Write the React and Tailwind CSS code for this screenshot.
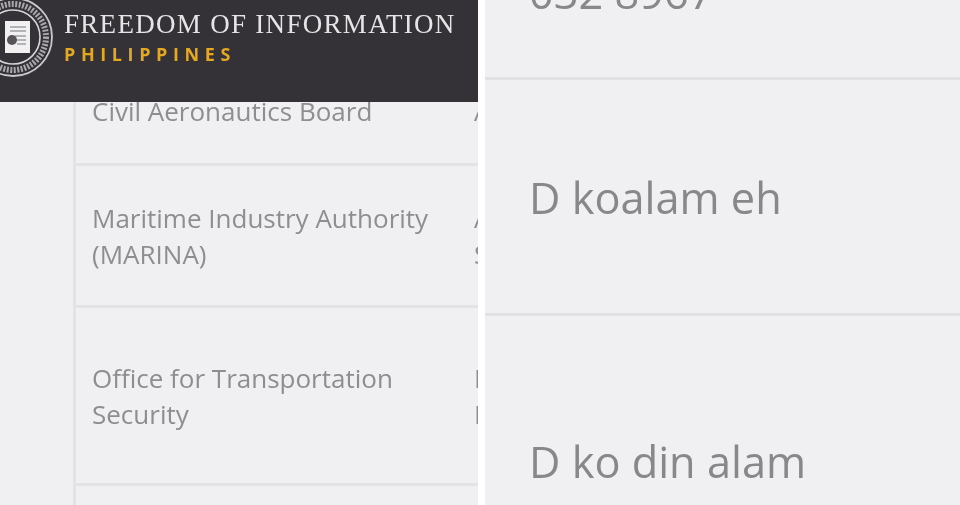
const font = { fontFamily: '"Open Sans", sans-serif' };

const Logo = () => (
  <svg width="80" height="80" viewBox="0 0 80 80" className="shrink-0 -ml-[27px] mt-[-28px] blur-[0.4px]">
    <circle cx="40" cy="40" r="39" fill="none" stroke="#c9c8ca" strokeWidth="1.8" />
    <circle cx="40" cy="40" r="33" fill="none" stroke="#a9a8ab" strokeWidth="6" strokeDasharray="2 1.5" />
    <circle cx="40" cy="40" r="27" fill="none" stroke="#d6d5d7" strokeWidth="1.6" />
    <rect x="32" y="24" width="25" height="32" fill="#f1f1f2" />
    <path d="M37 30h16M37 34h16M42 39h11M44 43h9M44 47h9" stroke="#77757a" strokeWidth="1.2" />
    <circle cx="39" cy="43" r="5" fill="#57555a" />
  </svg>
);

const Row = ({ lines, cut, className }) => (
  <div className={`flex border-b-[3px] border-[#e3e3e6] ${className}`}>
    <div className="w-[398px] shrink-0 pl-[16px] text-[26px] leading-[36px] text-[#8e8e91] blur-[0.5px]">
      {lines.map((l) => <div key={l}>{l}</div>)}
    </div>
    <div className="text-[26px] leading-[36px] text-[#8e8e91] blur-[0.5px]">
      {cut.map((l, i) => <div key={i}>{l}</div>)}
    </div>
  </div>
);

export default function App() {
  return (
    <div className="flex h-[505px] w-[960px] overflow-hidden bg-white" style={font}>
      {/* left page */}
      <div className="flex h-full w-[478px] shrink-0 flex-col overflow-hidden bg-[#f0f0f3]">
        <header className="relative z-10 flex h-[102px] shrink-0 items-center gap-[11px] overflow-hidden bg-[#343137]">
          <Logo />
          <div className="mt-[-29px] blur-[0.3px]">
            <div className="whitespace-nowrap text-[27px] leading-[30px] tracking-[1.3px] text-[#e6e5e6] [font-family:'Liberation_Serif',serif]">
              FREEDOM OF INFORMATION
            </div>
            <div className="mt-[5px] whitespace-nowrap text-[18px] font-bold leading-[20px] tracking-[5.6px] text-[#e5a921]">
              PHILIPPINES
            </div>
          </div>
        </header>
        <div className="ml-[73px] flex w-[500px] flex-1 flex-col border-l-[3px] border-[#e3e3e6]">
          <Row className="mt-[-9px] h-[73px] shrink-0" lines={['Civil Aeronautics Board']} cut={['A']} />
          <Row className="h-[142px] shrink-0 pt-[34px]" lines={['Maritime Industry Authority', '(MARINA)']} cut={['A', 'S']} />
          <Row className="h-[178px] shrink-0 pt-[52px]" lines={['Office for Transportation', 'Security']} cut={['I', 'I']} />
        </div>
      </div>

      {/* right page */}
      <div className="ml-[7px] flex h-full flex-1 flex-col overflow-hidden bg-[#f0f0f3] text-[43.3px] text-[#88888b]">
        <div className="h-[80px] shrink-0 border-b-[3px] border-[#e1e1e4] pl-[44px] leading-[40px] blur-[0.5px]">
          <div className="mt-[-27px]">032 8967</div>
        </div>
        <div className="flex h-[236px] shrink-0 items-center border-b-[3px] border-[#e1e1e4] pl-[44px] blur-[0.4px]">
          <span className="mt-[4px]">D koalam eh</span>
        </div>
        <div className="pl-[44px] pt-[119px] leading-[54px] blur-[0.4px]">D ko din alam</div>
      </div>
    </div>
  );
}
